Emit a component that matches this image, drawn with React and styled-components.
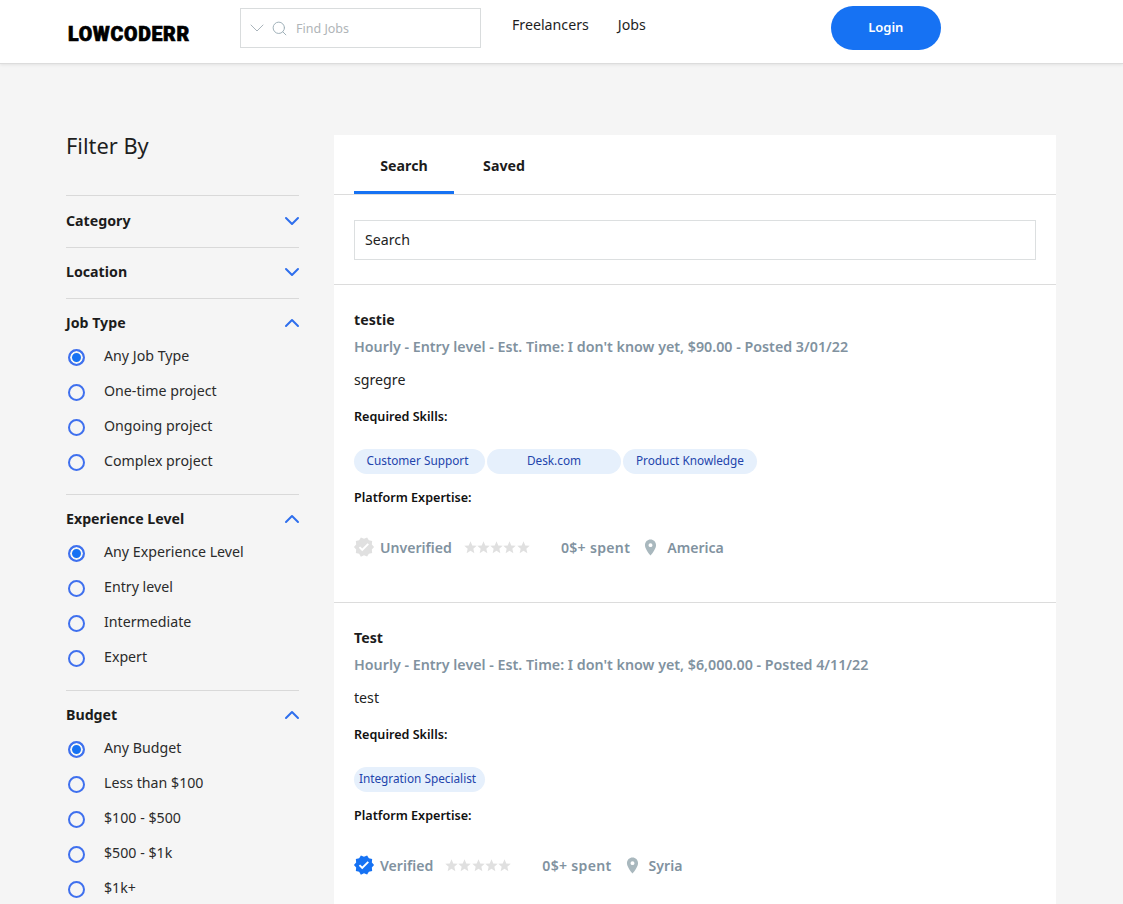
import React from "react";
import styled, { createGlobalStyle } from "styled-components";
import { ChevronDown, ChevronUp, Search as SearchIcon } from "lucide-react";
import { MdVerified, MdStar, MdLocationOn } from "react-icons/md";

const filters = [
  { title: "Job Type", options: ["Any Job Type", "One-time project", "Ongoing project", "Complex project"] },
  { title: "Experience Level", options: ["Any Experience Level", "Entry level", "Intermediate", "Expert"] },
  { title: "Budget", options: ["Any Budget", "Less than $100", "$100 - $500", "$500 - $1k", "$1k+"] },
];

const jobs = [
  {
    title: "testie",
    meta: "Hourly - Entry level - Est. Time: I don't know yet, $90.00 - Posted 3/01/22",
    desc: "sgregre",
    skills: ["Customer Support", "Desk.com", "Product Knowledge"],
    verified: false,
    location: "America",
  },
  {
    title: "Test",
    meta: "Hourly - Entry level - Est. Time: I don't know yet, $6,000.00 - Posted 4/11/22",
    desc: "test",
    skills: ["Integration Specialist"],
    verified: true,
    location: "Syria",
  },
];

const App = () => (
  <Page>
    <GlobalStyle />
    <Nav>
      <Logo>LOWCODERR</Logo>
      <NavSearch>
        <NavChevron size={24} strokeWidth={1} color="#a9b4bb" />
        <SearchIcon size={17} strokeWidth={1.4} color="#9fb0b8" />
        <span>Find Jobs</span>
      </NavSearch>
      <NavLinks>
        <a>Freelancers</a>
        <a>Jobs</a>
      </NavLinks>
      <LoginButton>Login</LoginButton>
    </Nav>
    <Content>
      <Sidebar>
        <SideTitle>Filter By</SideTitle>
        <ClosedFilter>
          <span>Category</span>
          <ChevronDown size={24} strokeWidth={2} color="#2f6fed" />
        </ClosedFilter>
        <ClosedFilter $short>
          <span>Location</span>
          <ChevronDown size={24} strokeWidth={2} color="#2f6fed" />
        </ClosedFilter>
        {filters.map((f) => (
          <FilterGroup key={f.title}>
            <GroupHeader>
              <span>{f.title}</span>
              <ChevronUp size={24} strokeWidth={2} color="#2f6fed" />
            </GroupHeader>
            {f.options.map((o, i) => (
              <RadioRow key={o}>
                <Radio $checked={i === 0} />
                <span>{o}</span>
              </RadioRow>
            ))}
          </FilterGroup>
        ))}
      </Sidebar>
      <Main>
        <Tabs>
          <Tab $active>Search</Tab>
          <Tab>Saved</Tab>
        </Tabs>
        <SearchWrap>
          <SearchBox>Search</SearchBox>
        </SearchWrap>
        {jobs.map((job) => (
          <Job key={job.title}>
            <JobTitle>{job.title}</JobTitle>
            <JobMeta>{job.meta}</JobMeta>
            <JobDesc>{job.desc}</JobDesc>
            <Label>Required Skills:</Label>
            <Chips>
              {job.skills.map((s) => (
                <Chip key={s}>{s}</Chip>
              ))}
            </Chips>
            <Label>Platform Expertise:</Label>
            <JobFooter>
              <Status>
                <Badge $verified={job.verified}>
                  <MdVerified size={22} />
                </Badge>
                {job.verified ? "Verified" : "Unverified"}
              </Status>
              <Stars>
                {[0, 1, 2, 3, 4].map((n) => (
                  <MdStar key={n} size={15} />
                ))}
              </Stars>
              <Spent>0$+ spent</Spent>
              <Place>
                <MdLocationOn size={19} color="#a9b8be" />
                {job.location}
              </Place>
            </JobFooter>
          </Job>
        ))}
      </Main>
    </Content>
  </Page>
);

const GlobalStyle = createGlobalStyle`
  html, body {
    margin: 0;
    height: 100%;
    overflow: hidden;
    background: #f5f5f5;
    font-family: "Noto Sans", "Open Sans", sans-serif;
    color: #1c1c1c;
  }
  * { box-sizing: border-box; }
`;

const Page = styled.div`
  height: 904px;
  overflow: hidden;
`;

const Nav = styled.header`
  height: 64px;
  background: #fff;
  border-bottom: 1px solid #dcdcdc;
  box-shadow: 0 1px 3px rgba(0, 0, 0, 0.08);
  display: flex;
  align-items: flex-start;
  padding-left: 68px;
`;

const Logo = styled.div`
  width: 172px;
  margin-top: 23px;
  font-family: Roboto, "Liberation Sans", sans-serif;
  font-size: 19.5px;
  line-height: 24px;
  font-weight: 900;
  letter-spacing: 0.7px;
  color: #000;
  -webkit-text-stroke: 0.7px #000;
`;

const NavSearch = styled.div`
  width: 241px;
  height: 40px;
  margin-top: 8px;
  border: 1px solid #d9dcdd;
  display: flex;
  align-items: center;
  padding-left: 4px;
  gap: 2px;
  font-size: 12.5px;
  color: #b0b5b8;

  span {
    margin-left: 6px;
  }
`;

const NavChevron = styled(ChevronDown)`
  flex: none;
`;

const NavLinks = styled.nav`
  display: flex;
  gap: 29px;
  margin-left: 31px;
  margin-top: 14px;
  font-size: 14.2px;
  line-height: 22px;
  color: #1e1e1e;
`;

const LoginButton = styled.button`
  width: 110px;
  height: 44px;
  margin-top: 6px;
  margin-left: 185px;
  padding-bottom: 4px;
  border: 0;
  border-radius: 22px;
  background: #1672f3;
  color: #fff;
  font: 600 13px "Noto Sans", sans-serif;
`;

const Content = styled.div`
  display: flex;
  align-items: flex-start;
  padding: 71px 0 0 66px;
  gap: 35px;
`;

const Sidebar = styled.aside`
  width: 233px;
  flex: none;
`;

const SideTitle = styled.h2`
  margin: 0;
  height: 60px;
  font-size: 21.8px;
  line-height: 22px;
  font-weight: 400;
  color: #1e1e1e;
`;

const ClosedFilter = styled.div`
  display: flex;
  align-items: center;
  justify-content: space-between;
  height: ${(p) => (p.$short ? "51px" : "52px")};
  border-top: 1px solid #d9d9d9;
  font-size: 14.2px;
  font-weight: 700;
  color: #1c1c1c;

  span {
    padding-bottom: 3px;
  }

  svg {
    margin: 0 -5px 2px 0;
  }
`;

const GroupHeader = styled.div`
  display: flex;
  align-items: center;
  justify-content: space-between;
  height: 40px;
  padding-top: 6px;
  font-size: 14.2px;
  font-weight: 700;
  color: #1c1c1c;

  svg {
    margin-right: -5px;
    margin-top: 2px;
  }
`;

const FilterGroup = styled.section`
  border-top: 1px solid #d9d9d9;
  padding-bottom: 15px;
`;

const RadioRow = styled.label`
  display: flex;
  align-items: center;
  height: 35px;
  font-size: 14.2px;
  color: #2b2b2b;
  gap: 19px;
  padding-left: 2px;

  span {
    padding-bottom: 2px;
  }
`;

const Radio = styled.i`
  width: 17px;
  height: 17px;
  margin-top: 1px;
  border-radius: 50%;
  border: 2px solid #3f70ee;
  background: ${(p) => (p.$checked ? "#1672f3" : "transparent")};
  box-shadow: ${(p) => (p.$checked ? "inset 0 0 0 2px #f5f5f5" : "none")};
  flex: none;
`;

const Main = styled.main`
  width: 722px;
  flex: none;
  background: #fff;
`;

const Tabs = styled.div`
  display: flex;
  height: 60px;
  padding-left: 20px;
  border-bottom: 1px solid #dcdcdc;
`;

const Tab = styled.div`
  width: 100px;
  height: 59px;
  display: flex;
  align-items: center;
  justify-content: center;
  padding-top: 4px;
  font-size: 14.2px;
  font-weight: 700;
  color: #1c1c1c;
  border-bottom: 3px solid ${(p) => (p.$active ? "#1672f3" : "transparent")};
`;

const SearchWrap = styled.div`
  padding: 25px 20px 24px;
`;

const SearchBox = styled.div`
  height: 40px;
  border: 1px solid #dcdfe0;
  display: flex;
  align-items: center;
  padding: 0 0 2px 10px;
  font-size: 14.2px;
  color: #222;
`;

const Job = styled.article`
  border-top: 1px solid #dcdcdc;
  padding: 24px 20px 0;
  height: 318px;
`;

const JobTitle = styled.h3`
  margin: 0;
  font-size: 14.2px;
  line-height: 21px;
  font-weight: 700;
  color: #1c1c1c;
`;

const JobMeta = styled.div`
  margin-top: 6px;
  font-size: 14.27px;
  line-height: 22px;
  font-weight: 600;
  color: #81929f;
`;

const JobDesc = styled.p`
  margin: 11px 0 0;
  font-size: 14.2px;
  line-height: 21px;
  color: #222;
`;

const Label = styled.div`
  margin-top: 16px;
  font-size: 12.6px;
  line-height: 22px;
  font-weight: 600;
  color: #111;

  & ~ & {
    margin-top: 13px;
  }
`;

const Chips = styled.div`
  display: flex;
  gap: 2px;
  margin-top: 21px;
`;

const Chip = styled.span`
  width: 134px;
  height: 25px;
  padding-bottom: 3px;
  display: flex;
  align-items: center;
  justify-content: center;
  border-radius: 13px;
  background: #e6f0fc;
  color: #2345ac;
  font-size: 11.8px;
  white-space: nowrap;

  &:first-child {
    width: 131px;
    padding-right: 4px;
  }
`;

const JobFooter = styled.div`
  display: flex;
  align-items: center;
  margin-top: 27px;
  font-size: 14.1px;
  font-weight: 600;
  color: #81929f;
`;

const Status = styled.div`
  display: flex;
  align-items: center;
  gap: 5px;
`;

const Badge = styled.span`
  display: flex;
  margin-left: -1px;
  color: ${(p) => (p.$verified ? "#1672f3" : "#e0e0e0")};
`;

const Stars = styled.div`
  display: flex;
  color: #e0e0e0;
  margin-left: 11px;
  margin-right: 32px;

  svg {
    margin-right: -1.8px;
  }
`;

const Spent = styled.span`
  letter-spacing: 0.3px;
`;

const Place = styled.span`
  display: flex;
  align-items: center;
  gap: 7px;
  margin-left: 11px;
`;

export default App;
